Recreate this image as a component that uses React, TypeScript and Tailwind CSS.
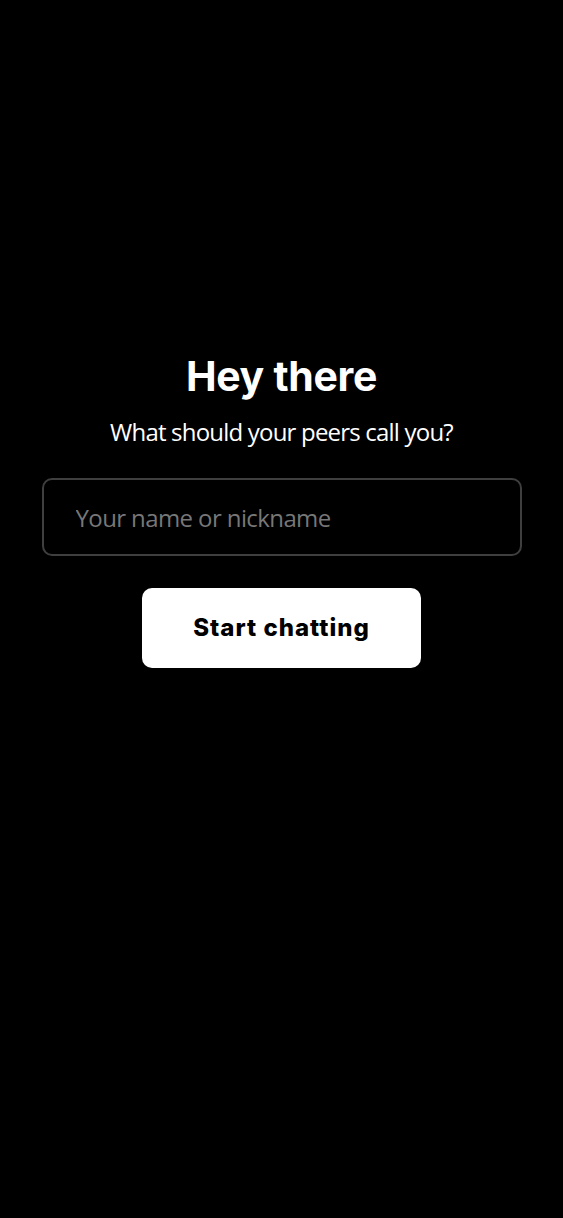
import React from "react";

export default function App() {
  return (
    <div className="min-h-[1218px] w-full bg-black flex flex-col items-center pt-[348px]">
      <h1 className="text-white text-[41px] leading-[56px] font-bold tracking-[-0.3px] font-['Inter','Noto_Sans',sans-serif]">
        Hey there
      </h1>
      <p className="mt-[12px] text-white text-[24px] leading-[32px] font-medium tracking-[-0.8px] font-['Open_Sans','Noto_Sans',sans-serif]">
        What should your peers call you?
      </p>
      <input
        className="mt-[30px] w-[480px] h-[78px] rounded-[10px] border-2 border-[#3f3f3f] bg-black px-[32px] text-[24px] text-white placeholder:text-[#777777] outline-none tracking-[-0.6px] font-['Open_Sans','Noto_Sans',sans-serif]"
        placeholder="Your name or nickname"
      />
      <button className="mt-[32px] w-[279px] h-[80px] rounded-[10px] bg-white text-black text-[24px] font-extrabold tracking-[1px] font-['Inter','Noto_Sans',sans-serif]">
        Start chatting
      </button>
    </div>
  );
}
